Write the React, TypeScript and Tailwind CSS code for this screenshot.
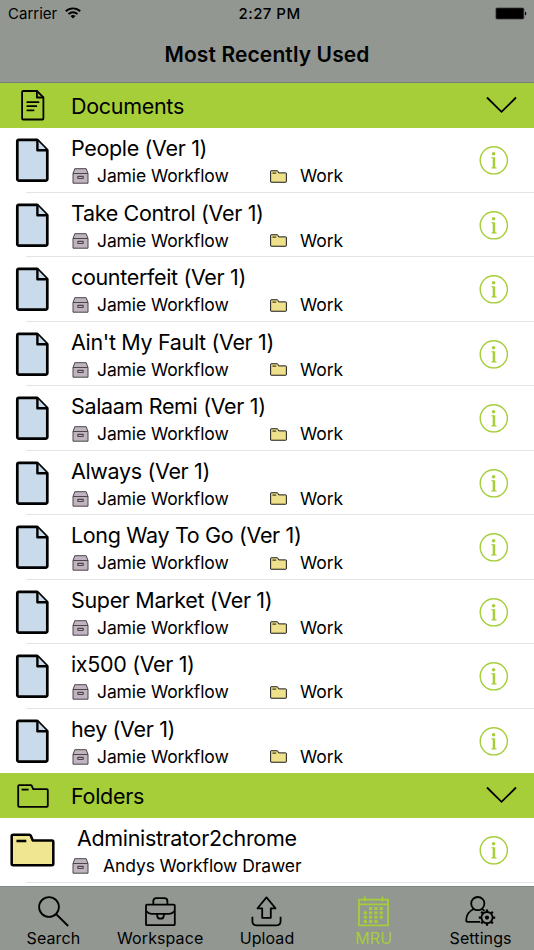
import type { ReactNode } from "react";

const DOCUMENTS = [
  "People (Ver 1)",
  "Take Control (Ver 1)",
  "counterfeit (Ver 1)",
  "Ain't My Fault (Ver 1)",
  "Salaam Remi (Ver 1)",
  "Always (Ver 1)",
  "Long Way To Go (Ver 1)",
  "Super Market (Ver 1)",
  "ix500 (Ver 1)",
  "hey (Ver 1)",
];

// filled day cells of the MRU calendar, one list of columns per row
const CALENDAR_CELLS = [
  [1, 2, 3],
  [0, 1, 2, 3],
  [0, 1, 2, 3],
  [0, 1, 2],
];

export default function App() {
  return (
    <div className="flex h-[950px] w-[534px] flex-col overflow-hidden bg-white font-['Inter',sans-serif] text-black">
      <StatusBar />
      <header className="flex h-[56px] shrink-0 items-center justify-center border-b border-[#7c807c] bg-[#929792]">
        <h1 className="text-[21px] leading-7 font-semibold tracking-[0.12px]">Most Recently Used</h1>
      </header>

      <main className="min-h-0 flex-1 overflow-hidden">
        <SectionHeader title="Documents" icon={<DocumentLinesIcon />} />
        <ul>
          {DOCUMENTS.map((name, i) => (
            <DocumentRow key={name} name={name} last={i === DOCUMENTS.length - 1} />
          ))}
        </ul>
        <SectionHeader title="Folders" icon={<FolderIcon className="h-[24px] w-[32px]" fill="none" stroke={1.8} />} />
        <FolderRow />
      </main>

      <TabBar />
    </div>
  );
}

function StatusBar() {
  return (
    <div className="grid h-[27px] shrink-0 grid-cols-3 items-center bg-[#929792] px-2 pt-px text-[15px]">
      <div className="flex items-center gap-[8px]">
        <span className="tracking-[0px]">Carrier</span>
        <svg className="mt-[-2px] h-3 w-4" viewBox="0 0 16 12" fill="none" stroke="#000" strokeWidth="1.9">
          <path d="M.8 4.3a10.3 10.3 0 0 1 14.4 0M3.5 7.1a6.4 6.4 0 0 1 9 0" />
          <path d="M8 11.6 5.5 9.1a3.6 3.6 0 0 1 5 0z" fill="#000" stroke="none" />
        </svg>
      </div>
      <span className="pl-[5px] text-center font-medium tracking-[0.45px]">2:27 PM</span>
      <svg className="mr-[-1px] mt-[-1px] h-[13px] w-[32px] justify-self-end" viewBox="0 0 32 13">
        <rect x=".4" y=".4" width="29" height="12.2" rx="1.8" fill="#4e504e" />
        <rect x="1.2" y="1.2" width="27.3" height="10.6" rx="1" />
        <path d="M30 4.4q1.3 .6 1.3 2.1t-1.3 2.1z" />
      </svg>
    </div>
  );
}

function SectionHeader({ title, icon }: { title: string; icon: ReactNode }) {
  return (
    <div className="flex h-[45px] items-center bg-[#a6ce39] pr-4">
      <div className="flex w-[65px] shrink-0 justify-center">{icon}</div>
      <h2 className="ml-[6px] flex-1 text-[21.5px] leading-7 tracking-[-0.3px]">{title}</h2>
      <svg className="mt-[-2px] h-[18px] w-8" viewBox="0 0 32 18" fill="none" stroke="#000" strokeWidth="1.8">
        <path d="m1 1.5 14.5 14.3L30 1.5" />
      </svg>
    </div>
  );
}

function DocumentRow({ name, last }: { name: string; last: boolean }) {
  return (
    <li className="flex h-[64.5px] flex-col">
      <div className="flex flex-1">
        <div className="w-[65px] shrink-0 pt-[10px] pl-[15px]">
          <svg className="h-[45px] w-[35px]" viewBox="0 0 35 45" stroke="#000" strokeWidth="2.7" strokeLinejoin="round">
            <path d="M3.9 1.9h18.4L32.3 12.3V41a1.6 1.6 0 0 1-1.6 1.6H3.9A1.6 1.6 0 0 1 2.3 41V3.5a1.6 1.6 0 0 1 1.6-1.6z" fill="#c9daeb" />
            <path d="M22.4 2.4v9.9h9.6" fill="#c9daeb" strokeWidth="2.4" />
          </svg>
        </div>
        <div className="ml-[6px] flex-1 pt-[6px]">
          <h3 className="text-[21.5px] leading-7 tracking-[-0.34px]">{name}</h3>
          <div className="flex h-7 items-center text-[17.5px] tracking-[-0.1px]">
            <span className="flex w-[199px] items-center gap-2">
              <DrawerIcon />
              <span className="pt-px">Jamie Workflow</span>
            </span>
            <FolderIcon className="h-[13px] w-[17px]" fill="#efe08c" stroke={1.7} />
            <span className="ml-[13px] pt-px">Work</span>
          </div>
        </div>
        <InfoIcon />
      </div>
      {!last && <div className="ml-[26px] h-px shrink-0 bg-[#e4e4e6]" />}
    </li>
  );
}

function FolderRow() {
  return (
    <div className="flex h-[65px] flex-col">
      <div className="flex flex-1">
        <div className="w-[65px] shrink-0 pt-[15px] pl-[10px]">
          <FolderIcon className="h-[34px] w-[45px]" fill="#f0e590" stroke={1.8} />
        </div>
        <div className="ml-[6px] flex-1 pt-[6px]">
          <h3 className="pl-[6px] text-[21.5px] leading-7 tracking-[-0.34px]">Administrator2chrome</h3>
          <div className="flex h-7 items-center gap-[14px] text-[17.5px] tracking-[-0.1px]">
            <DrawerIcon />
            <span className="pt-px">Andys Workflow Drawer</span>
          </div>
        </div>
        <InfoIcon />
      </div>
      <div className="ml-[26px] h-px shrink-0 bg-[#e4e4e6]" />
    </div>
  );
}

function InfoIcon() {
  return (
    <svg className="mt-[18px] mr-[25px] size-[30px]" viewBox="0 0 30 30">
      <circle cx="14.8" cy="14.3" r="13.6" fill="none" stroke="#a6ce39" strokeWidth="1.4" />
      <circle cx="14.6" cy="7.7" r="1.8" fill="#a6ce39" />
      <path d="M12.2 11.3h4v9.9l1.4.4v.8h-5.2v-.8l1.3-.4v-8.6l-1.5-.5z" fill="#a6ce39" />
    </svg>
  );
}

function DrawerIcon() {
  return (
    <svg className="ml-px h-4 w-[17px] shrink-0" viewBox="0 0 17 16" fill="#bfb4bf" stroke="#4a464a" strokeWidth="1">
      <path d="M1 5.5 2.8.7h11.4L16 5.5v9.7H1z" />
      <path d="M1 5.5h15" />
      <rect x="5.8" y="8.3" width="5.4" height="2.2" rx=".5" strokeWidth="1.2" />
    </svg>
  );
}

function FolderIcon({ className, fill, stroke }: { className: string; fill: string; stroke: number }) {
  return (
    <svg className={className} viewBox="0 0 32 24" fill={fill} stroke="#000" strokeWidth={stroke} strokeLinejoin="round">
      <path d="M1.2 22V2.2q0-1 1-1h11.5q.8 0 1.1.7l1.4 3.3h13.6q1 0 1 1v15.6q0 1-1 1H2.2q-1 0-1-1z" />
      <path d="M4.6 5.6h7" />
    </svg>
  );
}

function DocumentLinesIcon() {
  return (
    <svg className="h-[31px] w-[24px]" viewBox="0 0 24 31" fill="none" stroke="#000" strokeWidth="1.8" strokeLinejoin="round" strokeLinecap="round">
      <path d="M2.1 1h13.8l6.5 6.3v21.2q0 1-1 1H2.1q-1 0-1-1V2q0-1 1-1z" />
      <path d="M15.9 1.2v6.3h6.3M6.3 12.2h11.2M6.3 16.2h9M6.3 20.3h6.3" />
    </svg>
  );
}

function TabBar() {
  return (
    <nav className="grid h-16 shrink-0 grid-cols-5 border-t border-[#858985] bg-[#929792]">
      <Tab label="Search">
        <circle cx="11" cy="11" r="9.9" />
        <path d="m18 18 12.2 12" />
      </Tab>
      <Tab label="Workspace">
        <rect x="1" y="8.7" width="28.8" height="20.5" rx="1" />
        <path d="M8.3 8.5V5.2q0-3.1 3.1-3.1h7.9q3.1 0 3.1 3.1v3.3M1.2 15.2q2.2 2.6 5.2 2.6h17.9q3 0 5.3-2.6M12.2 18v1.4q0 3.3 3.3 3.3t3.3-3.3V18" />
      </Tab>
      <Tab label="Upload">
        <path d="M11.2 21.8v-9.5H6.5L15.5 1.4l9 10.9h-4.7v9.5zM1.4 20.7v4.6q0 4 4 4h20.2q4 0 4-4v-4.6" />
      </Tab>
      <Tab label="MRU" active>
        <path d="M1 3.6h29v25.7H1zM1 8.4h29M6.8 .5v5M24.5 .5v5" strokeLinejoin="miter" />
        {CALENDAR_CELLS.map((columns, row) =>
          columns.map((column) => (
            <rect
              key={`${row}-${column}`}
              x={5.7 + column * 5.3}
              y={11 + row * 4.35}
              width="3.2"
              height="3"
              fill="currentColor"
              stroke="none"
            />
          )),
        )}
      </Tab>
      <Tab label="Settings">
        <circle cx="12.8" cy="7.6" r="6.6" />
        <path d="M8.8 13C3.9 15.2 1.2 19.1 1.2 24.3q0 1.6 1.7 1.6h12.3M16.8 13q1.6.7 2.7 1.9" />
        <circle cx="22" cy="21.6" r="5.6" />
        <circle cx="22" cy="21.6" r="1.2" fill="#000" />
        <path
          d="M22 16v-2.6M22 27.2v2.6M16.4 21.6h-2.6M27.6 21.6h2.6M18 17.6l-1.8-1.8M26 17.6l1.8-1.8M18 25.6l-1.8 1.8M26 25.6l1.8 1.8"
          strokeWidth="2.2"
        />
      </Tab>
    </nav>
  );
}

function Tab({ label, active = false, children }: { label: string; active?: boolean; children: ReactNode }) {
  return (
    <button type="button" className={`flex flex-col items-center pt-[9px] ${active ? "text-[#a6ce39]" : "text-black"}`}>
      <svg className="size-[31px] shrink-0" viewBox="0 0 31 31" fill="none" stroke="currentColor" strokeWidth="1.8" strokeLinejoin="round">
        {children}
      </svg>
      <span className="text-[16px] leading-[22px] tracking-[0.1px]">{label}</span>
    </button>
  );
}
